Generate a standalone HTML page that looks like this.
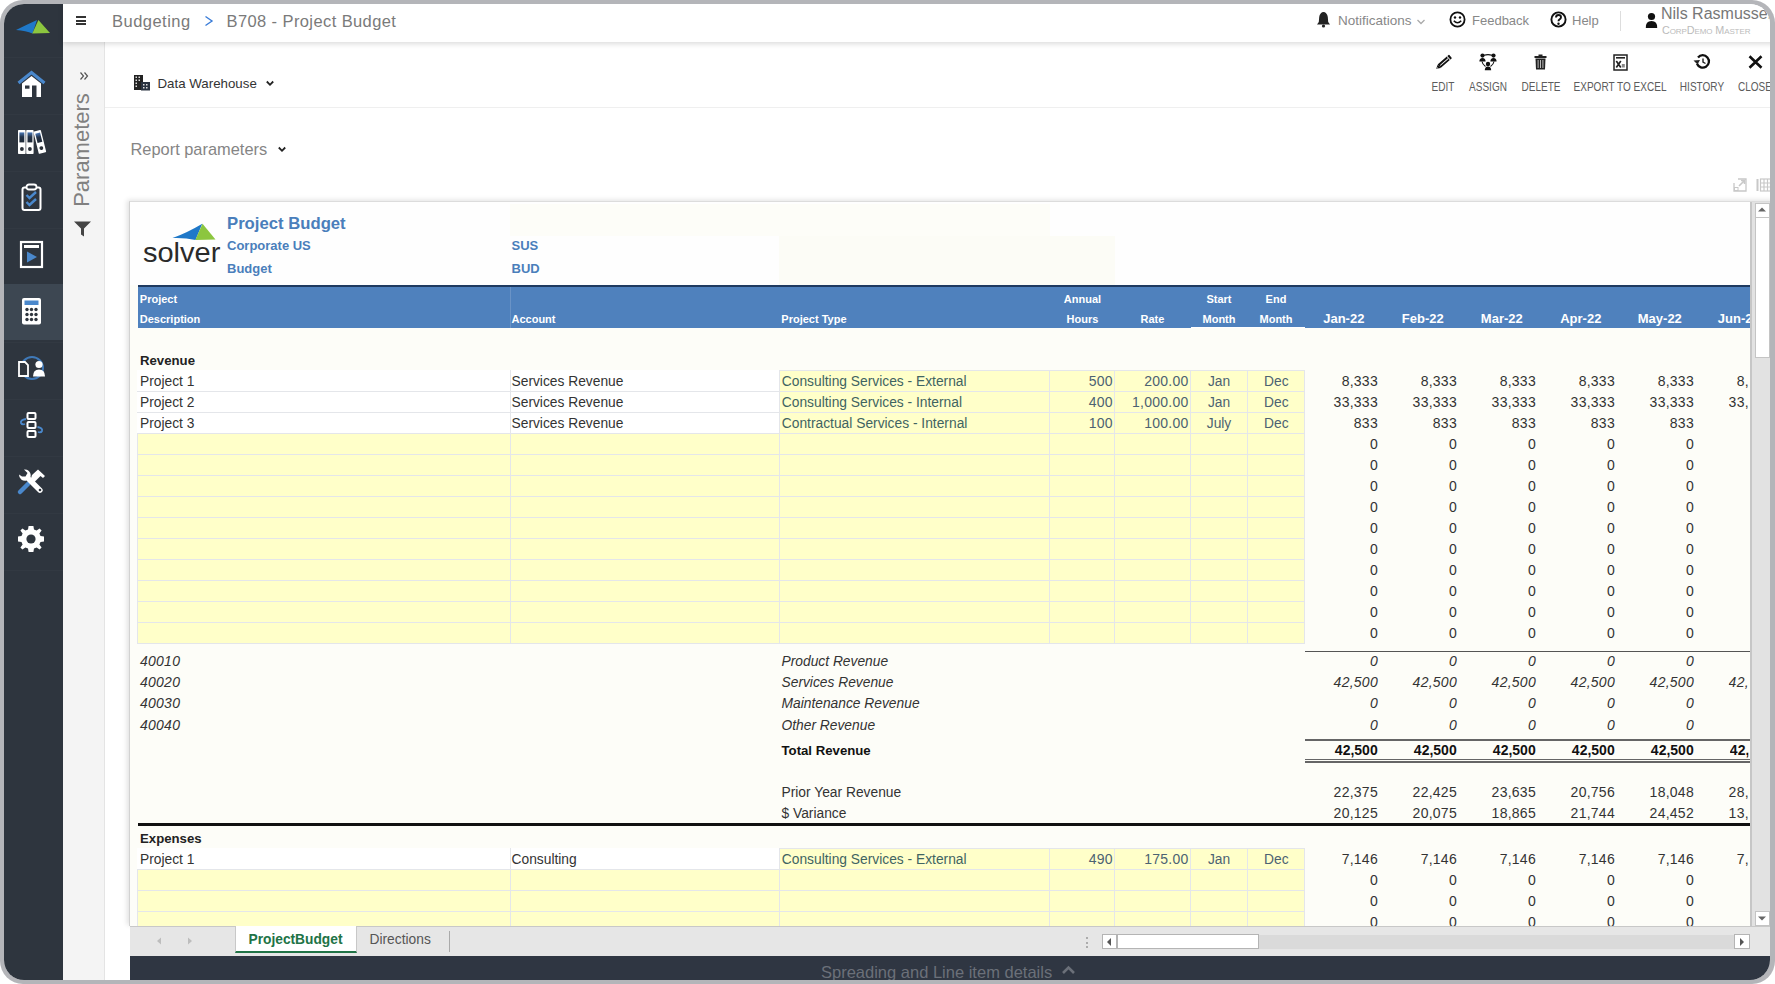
<!DOCTYPE html><html><head><meta charset="utf-8"><style>
*{box-sizing:border-box;margin:0;padding:0}
html,body{width:1775px;height:984px;overflow:hidden;background:#fff;font-family:"Liberation Sans",sans-serif}
.a{position:absolute}
#frame{position:absolute;left:0;top:0;width:1775px;height:984px;border-radius:23px;background:#b4b5b9}
#app{position:absolute;left:0;top:0;width:1775px;height:984px;clip-path:inset(4px 5px 4px 4px round 20px);background:#fff;overflow:hidden}
.t{position:absolute;white-space:nowrap;line-height:21px}
.sh{font-size:13.5px;color:#222}
</style></head><body>
<div id="frame"></div><div id="app">
<div class="a" style="left:0;top:0;width:63px;height:984px;background:#2e353e"></div>
<div class="a" style="left:4px;top:56.5px;width:59px;height:1px;background:#323942"></div>
<div class="a" style="left:4px;top:113.5px;width:59px;height:1px;background:#323942"></div>
<div class="a" style="left:4px;top:170.5px;width:59px;height:1px;background:#323942"></div>
<div class="a" style="left:4px;top:227.5px;width:59px;height:1px;background:#323942"></div>
<div class="a" style="left:4px;top:284.5px;width:59px;height:1px;background:#323942"></div>
<div class="a" style="left:4px;top:341.5px;width:59px;height:1px;background:#323942"></div>
<div class="a" style="left:4px;top:398.5px;width:59px;height:1px;background:#323942"></div>
<div class="a" style="left:4px;top:455.5px;width:59px;height:1px;background:#323942"></div>
<div class="a" style="left:4px;top:512.5px;width:59px;height:1px;background:#323942"></div>
<div class="a" style="left:4px;top:569.5px;width:59px;height:1px;background:#323942"></div>
<div class="a" style="left:4px;top:284px;width:59px;height:56px;background:#3d4752"></div>
<div class="a" style="left:63px;top:0;width:1712px;height:42px;background:#fff;box-shadow:0 2px 5px rgba(0,0,0,.14);z-index:2"></div>
<div class="a" style="left:63px;top:42px;width:42px;height:942px;background:#f4f4f4;border-right:1px solid #e4e4e4"></div>
<div class="a" style="left:105px;top:107px;width:1670px;height:1px;background:#efefef"></div>
<svg class="a" style="left:10px;top:14px;" width="46" height="26" viewBox="0 0 46 26"><path d="M6 16 Q16 11 27 6 L22.5 19.5 Q16 16.5 6 16Z" fill="#1f78c8"/><path d="M28.4 6 L40 19 L22.3 19.5Z" fill="#8cc63f"/></svg>
<svg class="a" style="left:16px;top:70px;" width="32" height="30" viewBox="0 0 32 30"><path d="M2.5 13 L15.5 2.5 L28.5 13" fill="none" stroke="#4a88cc" stroke-width="3.2" stroke-linejoin="miter"/><path d="M6 13.5 L15.5 6 L25 13.5 V27 H6Z" fill="#fff"/><rect x="9" y="15.5" width="4.5" height="3.2" fill="#2e353e"/><rect x="16" y="15.5" width="4.5" height="11.5" fill="#2e353e"/></svg>
<svg class="a" style="left:16px;top:128px;" width="32" height="28" viewBox="0 0 32 28"><defs><linearGradient id="bl" x1="0" y1="0" x2="0" y2="1"><stop offset="0" stop-color="#4a78b8"/><stop offset="0.45" stop-color="#233247"/><stop offset="1" stop-color="#1e2835"/></linearGradient></defs><g fill="#fff"><rect x="2" y="2" width="7.6" height="24" rx="0.8"/><rect x="10.2" y="2" width="7.4" height="24" rx="0.8"/></g><g fill="url(#bl)"><rect x="3.4" y="4.4" width="4.9" height="10"/><rect x="11.5" y="4.4" width="4.9" height="10"/></g><g fill="#2a3038"><circle cx="5.9" cy="21" r="1.9"/><circle cx="13.9" cy="21" r="1.9"/></g><g transform="rotate(-14 23 14)"><rect x="20" y="2.6" width="7.6" height="23" rx="0.8" fill="#fff"/><rect x="21.4" y="5" width="4.9" height="9.6" fill="url(#bl)"/><circle cx="23.8" cy="20.5" r="1.9" fill="#2a3038"/></g></svg>
<svg class="a" style="left:20px;top:182px;" width="24" height="31" viewBox="0 0 24 31"><rect x="2.5" y="5.5" width="18" height="22.5" rx="2" fill="none" stroke="#fff" stroke-width="2"/><rect x="6.5" y="2.5" width="10" height="5" rx="2.5" fill="#2e353e" stroke="#fff" stroke-width="1.8"/><path d="M6.5 13 L9.5 16 L16 10 M6.5 20 L9.5 23 L16 17" fill="none" stroke="#4a88cc" stroke-width="2.4"/></svg>
<svg class="a" style="left:19px;top:240px;" width="26" height="30" viewBox="0 0 26 30"><rect x="2" y="2" width="21" height="25" fill="none" stroke="#fff" stroke-width="2.2"/><rect x="5" y="5" width="15" height="3" fill="#fff"/><path d="M8 11.5 L18 17 L8 22.5Z" fill="#4a88cc"/></svg>
<svg class="a" style="left:21px;top:297px;" width="22" height="29" viewBox="0 0 22 29"><rect x="1" y="1" width="19" height="26.5" rx="2" fill="#fff"/><rect x="3.5" y="3.5" width="14" height="4.5" fill="#4a88cc"/><g fill="#2e353e"><circle cx="6" cy="12.5" r="1.7"/><circle cx="10.5" cy="12.5" r="1.7"/><circle cx="15" cy="12.5" r="1.7"/><circle cx="6" cy="17.5" r="1.7"/><circle cx="10.5" cy="17.5" r="1.7"/><circle cx="15" cy="17.5" r="1.7"/><circle cx="6" cy="22.5" r="1.7"/><circle cx="10.5" cy="22.5" r="1.7"/><circle cx="15" cy="22.5" r="1.7"/></g></svg>
<svg class="a" style="left:16px;top:354px;" width="32" height="28" viewBox="0 0 32 28"><circle cx="16" cy="14" r="11" fill="none" stroke="#3f79b8" stroke-width="2"/><path d="M3 8 H9 L12 11 V22 H3Z" fill="#2e353e" stroke="#fff" stroke-width="1.8"/><circle cx="23" cy="10.5" r="3.6" fill="#fff"/><path d="M17 22.5 Q17 15.5 23 15.5 Q29 15.5 29 22.5Z" fill="#fff"/></svg>
<svg class="a" style="left:18px;top:411px;" width="28" height="29" viewBox="0 0 28 29"><g fill="none" stroke="#fff" stroke-width="2"><rect x="9.5" y="2" width="8" height="6" rx="1"/><rect x="9.5" y="11" width="8" height="6" rx="1"/><rect x="9.5" y="20" width="8" height="6" rx="1"/></g><path d="M8 8 Q2 9 3 12 Q4 14 7 13 M19.5 16 Q25 17 24 20 Q23 22 20 21" fill="none" stroke="#4a88cc" stroke-width="1.8"/></svg>
<svg class="a" style="left:16px;top:468px;" width="31" height="28" viewBox="0 0 31 28"><path d="M4 24 L12 16" stroke="#4a88cc" stroke-width="4.5" stroke-linecap="round"/><path d="M3 6.5 A6 6 0 0 0 10.5 12.5 L22 24 A2.5 2.5 0 0 0 26 20.5 L14.5 9 A6 6 0 0 0 8 1.5 L11.5 5 L9.5 8.5 L6 8.5Z" fill="#fff"/><path d="M16 7 L22 1.5 L29 8 L27 10 L24.5 8 L16.5 16 L14 13.5Z" fill="#fff"/><circle cx="24" cy="22" r="1.3" fill="#2e353e"/></svg>
<svg class="a" style="left:17px;top:525px;" width="28" height="28" viewBox="0 0 28 28"><g transform="translate(14 14)"><path fill="#fff" d="M-2.4 -13 H2.4 L3 -9.5 L5.6 -8.4 L8.6 -10.6 L10.6 -8.6 L8.4 -5.6 L9.5 -3 L13 -2.4 V2.4 L9.5 3 L8.4 5.6 L10.6 8.6 L8.6 10.6 L5.6 8.4 L3 9.5 L2.4 13 H-2.4 L-3 9.5 L-5.6 8.4 L-8.6 10.6 L-10.6 8.6 L-8.4 5.6 L-9.5 3 L-13 2.4 V-2.4 L-9.5 -3 L-8.4 -5.6 L-10.6 -8.6 L-8.6 -10.6 L-5.6 -8.4 L-3 -9.5Z"/><circle r="4.6" fill="#2e353e"/></g></svg>
<div class="a" style="left:0;top:0;width:1775px;height:42px;z-index:3">
<div class="a" style="left:76px;top:16px;width:10px;height:2px;background:#333"></div>
<div class="a" style="left:76px;top:19.5px;width:10px;height:2px;background:#333"></div>
<div class="a" style="left:76px;top:23px;width:10px;height:2px;background:#333"></div>
<div class="t" style="left:112px;top:10.7px;font-size:16.5px;color:#7a7a7a;letter-spacing:0.48px">Budgeting</div>
<svg class="a" style="left:204px;top:15px" width="10" height="12" viewBox="0 0 10 12"><path d="M1.5 1.5 L8 6 L1.5 10.5" fill="none" stroke="#3b7dd8" stroke-width="1.4"/></svg>
<div class="t" style="left:226.5px;top:10.7px;font-size:16.5px;color:#7a7a7a;letter-spacing:0.4px">B708 - Project Budget</div>
<svg class="a" style="left:1316px;top:11px" width="15" height="17" viewBox="0 0 15 17"><path d="M7.5 1 C5.5 1 3.5 3 3.2 6 L2.8 11 L1 13.5 H14 L12.2 11 L11.8 6 C11.5 3 9.5 1 7.5 1Z" fill="#222"/><circle cx="7.5" cy="15" r="1.6" fill="#222"/></svg>
<div class="t" style="left:1338px;top:10px;font-size:13.5px;color:#888">Notifications</div>
<svg class="a" style="left:1416px;top:18px" width="10" height="8" viewBox="0 0 10 8"><path d="M1.5 2 L5 5.5 L8.5 2" fill="none" stroke="#aaa" stroke-width="1.3"/></svg>
<svg class="a" style="left:1449px;top:11px" width="17" height="17" viewBox="0 0 17 17"><circle cx="8.5" cy="8.5" r="7.1" fill="none" stroke="#111" stroke-width="1.8"/><circle cx="6" cy="6.5" r="1.2" fill="#111"/><circle cx="11" cy="6.5" r="1.2" fill="#111"/><path d="M4.8 9.8 Q8.5 13.8 12.2 9.8" fill="none" stroke="#111" stroke-width="1.6"/></svg>
<div class="t" style="left:1472px;top:10px;font-size:13px;color:#888">Feedback</div>
<svg class="a" style="left:1550px;top:11px" width="18" height="17" viewBox="0 0 18 17"><circle cx="8.5" cy="8.5" r="7.1" fill="none" stroke="#111" stroke-width="1.9"/><path d="M6 6.5 Q6 4 8.5 4 Q11 4 11 6.3 Q11 7.8 9.3 8.6 Q8.5 9 8.5 10.3" fill="none" stroke="#111" stroke-width="1.9"/><circle cx="8.5" cy="12.7" r="1.2" fill="#111"/></svg>
<div class="t" style="left:1572px;top:10px;font-size:13px;color:#888">Help</div>
<div class="a" style="left:1620px;top:11px;width:1px;height:20px;background:#ddd"></div>
<svg class="a" style="left:1645px;top:12px" width="13" height="17" viewBox="0 0 13 17"><circle cx="6.5" cy="4.5" r="3.6" fill="#111"/><path d="M0.8 16 Q0.5 9 6.5 9 Q12.5 9 12.2 16Z" fill="#111"/></svg>
<div class="t" style="left:1661px;top:3px;font-size:16px;color:#777;line-height:21px">Nils Rasmussen</div>
<div class="t" style="left:1662px;top:24px;font-size:10.8px;color:#bbb;line-height:12px;font-variant:small-caps;letter-spacing:-0.1px">CorpDemo Master</div>
</div>
<svg class="a" style="left:79px;top:71px" width="10" height="10" viewBox="0 0 10 10"><path d="M1.5 1.5 L4.5 5 L1.5 8.5 M5.5 1.5 L8.5 5 L5.5 8.5" fill="none" stroke="#555" stroke-width="1.2"/></svg>
<div class="t" style="left:81.5px;top:150px;font-size:22px;color:#808080;line-height:22px;transform:translate(-50%,-50%) rotate(-90deg);">Parameters</div>
<svg class="a" style="left:73px;top:220px" width="19" height="18" viewBox="0 0 19 18"><path d="M1 1.5 H18 L11 8.5 V16.5 L8 14.5 V8.5Z" fill="#444"/></svg>
<svg class="a" style="left:134px;top:75px" width="16" height="16" viewBox="0 0 16 16"><rect x="0" y="0" width="9" height="15" fill="#222"/><rect x="7" y="7" width="9" height="8.5" fill="#2a3340"/><g fill="#ddd"><rect x="1.5" y="1.5" width="1.5" height="1.5"/><rect x="4.5" y="1.5" width="1.5" height="1.5"/><rect x="1.5" y="4.5" width="1.5" height="1.5"/><rect x="4.5" y="4.5" width="1.5" height="1.5"/><rect x="1.5" y="7.5" width="1.5" height="1.5"/><rect x="1.5" y="10.5" width="1.5" height="1.5"/><rect x="9" y="9" width="1.5" height="1.5"/><rect x="12" y="9" width="1.5" height="1.5"/><rect x="9" y="12" width="1.5" height="1.5"/><rect x="12" y="12" width="1.5" height="1.5"/></g></svg>
<div class="t" style="left:157.5px;top:72.5px;font-size:13.3px;color:#333">Data Warehouse</div>
<svg class="a" style="left:265px;top:79px" width="10" height="9" viewBox="0 0 10 9"><path d="M1.8 2.5 L5 5.8 L8.2 2.5" fill="none" stroke="#222" stroke-width="1.8"/></svg>
<div class="t" style="left:130.5px;top:138.5px;font-size:16.4px;color:#858585">Report parameters</div>
<svg class="a" style="left:277px;top:145px" width="10" height="9" viewBox="0 0 10 9"><path d="M1.8 2.5 L5 5.8 L8.2 2.5" fill="none" stroke="#222" stroke-width="1.8"/></svg>
<div class="t" style="left:1443.3px;top:76.8px;font-size:12.4px;color:#5c5c5c;transform:translateX(-50%) scaleX(0.81);line-height:20px">EDIT</div>
<div class="t" style="left:1488px;top:76.8px;font-size:12.4px;color:#5c5c5c;transform:translateX(-50%) scaleX(0.81);line-height:20px">ASSIGN</div>
<div class="t" style="left:1540.7px;top:76.8px;font-size:12.4px;color:#5c5c5c;transform:translateX(-50%) scaleX(0.81);line-height:20px">DELETE</div>
<div class="t" style="left:1619.7px;top:76.8px;font-size:12.4px;color:#5c5c5c;transform:translateX(-50%) scaleX(0.81);line-height:20px">EXPORT TO EXCEL</div>
<div class="t" style="left:1702.3px;top:76.8px;font-size:12.4px;color:#5c5c5c;transform:translateX(-50%) scaleX(0.81);line-height:20px">HISTORY</div>
<div class="t" style="left:1755px;top:76.8px;font-size:12.4px;color:#5c5c5c;transform:translateX(-50%) scaleX(0.81);line-height:20px">CLOSE</div>
<svg class="a" style="left:1433.5px;top:52.75px" width="19" height="19" viewBox="0 0 19 19"><g transform="rotate(-41 9.5 9.5)"><rect x="3.8" y="7.2" width="15" height="4.6" rx="0.6" fill="#111"/><path d="M3.9 7.2 L-0.2 9.5 L3.9 11.8Z" fill="#111"/><rect x="5" y="9.1" width="10.5" height="0.9" fill="#fff"/><rect x="15.8" y="7.2" width="0.8" height="4.6" fill="#fff"/><path d="M0.9 9 L2.2 9.5 L0.9 10Z" fill="#fff"/></g></svg>
<svg class="a" style="left:1479px;top:53px" width="18" height="18" viewBox="0 0 18 18"><g stroke="#111" stroke-width="1.1" fill="none"><path d="M5 2.2 Q9 1 13 2.2"/><path d="M3 8.5 Q3.5 11.5 6.5 13.5"/><path d="M15 8.5 Q14.5 11.5 11.5 13.5"/></g><g fill="#111"><circle cx="3.5" cy="2.6" r="2.1"/><path d="M0.4 8.6 Q0.4 5 3.5 5 Q6.6 5 6.6 8.6Z"/><circle cx="14.5" cy="2.6" r="2.1"/><path d="M11.4 8.6 Q11.4 5 14.5 5 Q17.6 5 17.6 8.6Z"/><circle cx="9" cy="11" r="2.2"/><path d="M5.8 17.2 Q5.8 13.4 9 13.4 Q12.2 13.4 12.2 17.2Z"/></g></svg>
<svg class="a" style="left:1534px;top:54px" width="13" height="16" viewBox="0 0 13 16"><rect x="4.5" y="0.5" width="4" height="2" fill="#222"/><rect x="0.5" y="2" width="12" height="2" fill="#222"/><path d="M1.5 4.5 H11.5 L11 15.5 H2Z" fill="#222"/><g fill="#bbb"><rect x="3.6" y="6" width="1" height="8"/><rect x="6" y="6" width="1" height="8"/><rect x="8.4" y="6" width="1" height="8"/></g></svg>
<svg class="a" style="left:1612.5px;top:54px" width="15" height="17" viewBox="0 0 15 17"><rect x="1" y="1" width="13" height="15" fill="#fff" stroke="#222" stroke-width="1.5"/><rect x="3" y="3" width="9" height="1.6" fill="#222"/><path d="M3.3 7 L7.8 13.5 M7.8 7 L3.3 13.5" stroke="#222" stroke-width="1.7"/><rect x="8.8" y="10" width="3" height="3.5" fill="#888"/></svg>
<svg class="a" style="left:1693px;top:54px" width="18" height="16" viewBox="0 0 18 16"><path d="M4 9.8 A6.2 6.2 0 1 0 5 3.4" fill="none" stroke="#111" stroke-width="2.3"/><path d="M0.5 6.5 L4.5 10.5 L7 6Z" fill="#222"/><path d="M10 4.5 V8.2 L12.5 9.5" fill="none" stroke="#222" stroke-width="1.4"/></svg>
<svg class="a" style="left:1748px;top:55px" width="15" height="14" viewBox="0 0 15 14"><path d="M1.5 1.2 L13.5 12.8 M13.5 1.2 L1.5 12.8" stroke="#111" stroke-width="2.6"/></svg>
<div class="a" style="left:129px;top:201px;width:1646px;height:725px;background:#fdfdf8;border-left:1px solid #d2d2d2;border-top:1px solid #dcdcdc;box-shadow:-2px -1px 5px rgba(0,0,0,.12)"></div>
<div class="a" style="left:0;top:0;width:1750px;height:926px;clip-path:inset(202px 0 0 130px);z-index:1">
<div class="a" style="left:130px;top:202px;width:1620px;height:83px;background:#fefefe"></div>
<div class="a" style="left:779px;top:236px;width:336px;height:49px;background:#fcfcf6"></div>
<div class="a" style="left:510px;top:204px;width:540px;height:32px;background:#fdfdf8"></div>
<svg class="a" style="left:171px;top:222px" width="46" height="20" viewBox="0 0 46 20"><path d="M1.5 16 Q15 11.5 31.3 1.8 L24.5 18 Q14 15.5 1.5 16Z" fill="#1f78c8"/><path d="M31.5 1.8 L44.5 17.6 L24.3 18Z" fill="#8cc63f"/></svg>
<div class="t" style="left:142.5px;top:241.90px;font-size:28px;color:#2a2a2a;font-weight:normal;font-style:normal;transform-origin:0 0;transform:scaleX(1.035);">solver</div>
<div class="t" style="left:227px;top:212.71px;font-size:16.7px;color:#4a7ebb;font-weight:bold;font-style:normal;">Project Budget</div>
<div class="t" style="left:227px;top:235.10px;font-size:13px;color:#4a7ebb;font-weight:bold;font-style:normal;">Corporate US</div>
<div class="t" style="left:227px;top:257.60px;font-size:13px;color:#4a7ebb;font-weight:bold;font-style:normal;">Budget</div>
<div class="t" style="left:511.5px;top:235.10px;font-size:13px;color:#4a7ebb;font-weight:bold;font-style:normal;">SUS</div>
<div class="t" style="left:511.5px;top:257.60px;font-size:13px;color:#4a7ebb;font-weight:bold;font-style:normal;">BUD</div>
<div class="a" style="left:137.5px;top:285px;width:1612.5px;height:43px;background:#4f81bd"></div>
<div class="a" style="left:137.5px;top:285px;width:1612.5px;height:2px;background:#1f3a60"></div>
<div class="a" style="left:510px;top:287px;width:1px;height:41px;background:#6a93c6"></div>
<div class="a" style="left:1191px;top:327px;width:114px;height:1px;background:#ffffff"></div>
<div class="t" style="left:139.8px;top:288.79px;font-size:11px;color:#ffffff;font-weight:bold;font-style:normal;">Project</div>
<div class="t" style="left:139.8px;top:309.49px;font-size:11px;color:#ffffff;font-weight:bold;font-style:normal;">Description</div>
<div class="t" style="left:511.5px;top:309.49px;font-size:11px;color:#ffffff;font-weight:bold;font-style:normal;">Account</div>
<div class="t" style="left:781.3px;top:309.49px;font-size:11px;color:#ffffff;font-weight:bold;font-style:normal;">Project Type</div>
<div class="t" style="left:1082.5px;top:288.79px;font-size:11px;color:#ffffff;font-weight:bold;font-style:normal;transform:translateX(-50%);">Annual</div>
<div class="t" style="left:1082.5px;top:309.49px;font-size:11px;color:#ffffff;font-weight:bold;font-style:normal;transform:translateX(-50%);">Hours</div>
<div class="t" style="left:1152.4px;top:309.49px;font-size:11px;color:#ffffff;font-weight:bold;font-style:normal;transform:translateX(-50%);">Rate</div>
<div class="t" style="left:1219px;top:288.79px;font-size:11px;color:#ffffff;font-weight:bold;font-style:normal;transform:translateX(-50%);">Start</div>
<div class="t" style="left:1219px;top:309.49px;font-size:11px;color:#ffffff;font-weight:bold;font-style:normal;transform:translateX(-50%);">Month</div>
<div class="t" style="left:1276px;top:288.79px;font-size:11px;color:#ffffff;font-weight:bold;font-style:normal;transform:translateX(-50%);">End</div>
<div class="t" style="left:1276px;top:309.49px;font-size:11px;color:#ffffff;font-weight:bold;font-style:normal;transform:translateX(-50%);">Month</div>
<div class="t" style="left:1343.8px;top:308.00px;font-size:13px;color:#ffffff;font-weight:bold;font-style:normal;transform:translateX(-50%);">Jan-22</div>
<div class="t" style="left:1422.8px;top:308.00px;font-size:13px;color:#ffffff;font-weight:bold;font-style:normal;transform:translateX(-50%);">Feb-22</div>
<div class="t" style="left:1501.8px;top:308.00px;font-size:13px;color:#ffffff;font-weight:bold;font-style:normal;transform:translateX(-50%);">Mar-22</div>
<div class="t" style="left:1580.8px;top:308.00px;font-size:13px;color:#ffffff;font-weight:bold;font-style:normal;transform:translateX(-50%);">Apr-22</div>
<div class="t" style="left:1659.8px;top:308.00px;font-size:13px;color:#ffffff;font-weight:bold;font-style:normal;transform:translateX(-50%);">May-22</div>
<div class="t" style="left:1738.8px;top:308.00px;font-size:13px;color:#ffffff;font-weight:bold;font-style:normal;transform:translateX(-50%);">Jun-22</div>
<div class="a" style="left:137px;top:370px;width:642px;height:63px;background:#ffffff"></div>
<div class="a" style="left:137px;top:391px;width:642px;height:1px;background:#e4e6ea"></div>
<div class="a" style="left:137px;top:412px;width:642px;height:1px;background:#e4e6ea"></div>
<div class="a" style="left:137px;top:433px;width:642px;height:1px;background:#e4e6ea"></div>
<div class="a" style="left:510px;top:370px;width:1px;height:63px;background:#e4e6ea"></div>
<div class="a" style="left:779px;top:370px;width:526px;height:64px;background:#ffffc9"></div>
<div class="a" style="left:779px;top:370px;width:526px;height:1px;background:#e4e6ea"></div>
<div class="a" style="left:779px;top:391px;width:526px;height:1px;background:#e4e6ea"></div>
<div class="a" style="left:779px;top:412px;width:526px;height:1px;background:#e4e6ea"></div>
<div class="a" style="left:779px;top:433px;width:526px;height:1px;background:#e4e6ea"></div>
<div class="a" style="left:779px;top:370px;width:1px;height:64px;background:#e4e6ea"></div>
<div class="a" style="left:1049px;top:370px;width:1px;height:64px;background:#e4e6ea"></div>
<div class="a" style="left:1114px;top:370px;width:1px;height:64px;background:#e4e6ea"></div>
<div class="a" style="left:1190px;top:370px;width:1px;height:64px;background:#e4e6ea"></div>
<div class="a" style="left:1247px;top:370px;width:1px;height:64px;background:#e4e6ea"></div>
<div class="a" style="left:1304px;top:370px;width:1px;height:64px;background:#e4e6ea"></div>
<div class="a" style="left:137px;top:433px;width:1168px;height:211px;background:#ffffc9"></div>
<div class="a" style="left:137px;top:433px;width:1168px;height:1px;background:#e4e6ea"></div>
<div class="a" style="left:137px;top:454px;width:1168px;height:1px;background:#e4e6ea"></div>
<div class="a" style="left:137px;top:475px;width:1168px;height:1px;background:#e4e6ea"></div>
<div class="a" style="left:137px;top:496px;width:1168px;height:1px;background:#e4e6ea"></div>
<div class="a" style="left:137px;top:517px;width:1168px;height:1px;background:#e4e6ea"></div>
<div class="a" style="left:137px;top:538px;width:1168px;height:1px;background:#e4e6ea"></div>
<div class="a" style="left:137px;top:559px;width:1168px;height:1px;background:#e4e6ea"></div>
<div class="a" style="left:137px;top:580px;width:1168px;height:1px;background:#e4e6ea"></div>
<div class="a" style="left:137px;top:601px;width:1168px;height:1px;background:#e4e6ea"></div>
<div class="a" style="left:137px;top:622px;width:1168px;height:1px;background:#e4e6ea"></div>
<div class="a" style="left:137px;top:643px;width:1168px;height:1px;background:#e4e6ea"></div>
<div class="a" style="left:137px;top:433px;width:1px;height:211px;background:#e4e6ea"></div>
<div class="a" style="left:510px;top:433px;width:1px;height:211px;background:#e4e6ea"></div>
<div class="a" style="left:779px;top:433px;width:1px;height:211px;background:#e4e6ea"></div>
<div class="a" style="left:1049px;top:433px;width:1px;height:211px;background:#e4e6ea"></div>
<div class="a" style="left:1114px;top:433px;width:1px;height:211px;background:#e4e6ea"></div>
<div class="a" style="left:1190px;top:433px;width:1px;height:211px;background:#e4e6ea"></div>
<div class="a" style="left:1247px;top:433px;width:1px;height:211px;background:#e4e6ea"></div>
<div class="a" style="left:1304px;top:433px;width:1px;height:211px;background:#e4e6ea"></div>
<div class="t" style="left:140px;top:349.83px;font-size:13.2px;color:#222;font-weight:bold;font-style:normal;">Revenue</div>
<div class="t" style="left:140px;top:370.92px;font-size:13.8px;color:#333;font-weight:normal;font-style:normal;">Project 1</div>
<div class="t" style="left:511.5px;top:370.92px;font-size:13.8px;color:#333;font-weight:normal;font-style:normal;">Services Revenue</div>
<div class="t" style="left:781.8px;top:370.92px;font-size:13.8px;color:#3f6462;font-weight:normal;font-style:normal;">Consulting Services - External</div>
<div class="t" style="left:1112.75px;top:370.85px;font-size:14px;color:#4c6272;font-weight:normal;font-style:normal;transform:translateX(-100%);letter-spacing:0.25px;">500</div>
<div class="t" style="left:1188.55px;top:370.85px;font-size:14px;color:#4c6272;font-weight:normal;font-style:normal;transform:translateX(-100%);letter-spacing:0.25px;">200.00</div>
<div class="t" style="left:1219px;top:370.92px;font-size:13.8px;color:#4c6272;font-weight:normal;font-style:normal;transform:translateX(-50%);">Jan</div>
<div class="t" style="left:1276.3px;top:370.92px;font-size:13.8px;color:#4c6272;font-weight:normal;font-style:normal;transform:translateX(-50%);">Dec</div>
<div class="t" style="left:1377.95px;top:370.85px;font-size:14px;color:#333;font-weight:normal;font-style:normal;transform:translateX(-100%);letter-spacing:0.25px;">8,333</div>
<div class="t" style="left:1456.95px;top:370.85px;font-size:14px;color:#333;font-weight:normal;font-style:normal;transform:translateX(-100%);letter-spacing:0.25px;">8,333</div>
<div class="t" style="left:1535.95px;top:370.85px;font-size:14px;color:#333;font-weight:normal;font-style:normal;transform:translateX(-100%);letter-spacing:0.25px;">8,333</div>
<div class="t" style="left:1614.95px;top:370.85px;font-size:14px;color:#333;font-weight:normal;font-style:normal;transform:translateX(-100%);letter-spacing:0.25px;">8,333</div>
<div class="t" style="left:1693.95px;top:370.85px;font-size:14px;color:#333;font-weight:normal;font-style:normal;transform:translateX(-100%);letter-spacing:0.25px;">8,333</div>
<div class="t" style="left:1772.95px;top:370.85px;font-size:14px;color:#333;font-weight:normal;font-style:normal;transform:translateX(-100%);letter-spacing:0.25px;clip-path:inset(-5px 24.4px -5px 0);">8,333</div>
<div class="t" style="left:140px;top:391.92px;font-size:13.8px;color:#333;font-weight:normal;font-style:normal;">Project 2</div>
<div class="t" style="left:511.5px;top:391.92px;font-size:13.8px;color:#333;font-weight:normal;font-style:normal;">Services Revenue</div>
<div class="t" style="left:781.8px;top:391.92px;font-size:13.8px;color:#3f6462;font-weight:normal;font-style:normal;">Consulting Services - Internal</div>
<div class="t" style="left:1112.75px;top:391.85px;font-size:14px;color:#4c6272;font-weight:normal;font-style:normal;transform:translateX(-100%);letter-spacing:0.25px;">400</div>
<div class="t" style="left:1188.55px;top:391.85px;font-size:14px;color:#4c6272;font-weight:normal;font-style:normal;transform:translateX(-100%);letter-spacing:0.25px;">1,000.00</div>
<div class="t" style="left:1219px;top:391.92px;font-size:13.8px;color:#4c6272;font-weight:normal;font-style:normal;transform:translateX(-50%);">Jan</div>
<div class="t" style="left:1276.3px;top:391.92px;font-size:13.8px;color:#4c6272;font-weight:normal;font-style:normal;transform:translateX(-50%);">Dec</div>
<div class="t" style="left:1377.95px;top:391.85px;font-size:14px;color:#333;font-weight:normal;font-style:normal;transform:translateX(-100%);letter-spacing:0.25px;">33,333</div>
<div class="t" style="left:1456.95px;top:391.85px;font-size:14px;color:#333;font-weight:normal;font-style:normal;transform:translateX(-100%);letter-spacing:0.25px;">33,333</div>
<div class="t" style="left:1535.95px;top:391.85px;font-size:14px;color:#333;font-weight:normal;font-style:normal;transform:translateX(-100%);letter-spacing:0.25px;">33,333</div>
<div class="t" style="left:1614.95px;top:391.85px;font-size:14px;color:#333;font-weight:normal;font-style:normal;transform:translateX(-100%);letter-spacing:0.25px;">33,333</div>
<div class="t" style="left:1693.95px;top:391.85px;font-size:14px;color:#333;font-weight:normal;font-style:normal;transform:translateX(-100%);letter-spacing:0.25px;">33,333</div>
<div class="t" style="left:1772.95px;top:391.85px;font-size:14px;color:#333;font-weight:normal;font-style:normal;transform:translateX(-100%);letter-spacing:0.25px;clip-path:inset(-5px 24.4px -5px 0);">33,333</div>
<div class="t" style="left:140px;top:412.92px;font-size:13.8px;color:#333;font-weight:normal;font-style:normal;">Project 3</div>
<div class="t" style="left:511.5px;top:412.92px;font-size:13.8px;color:#333;font-weight:normal;font-style:normal;">Services Revenue</div>
<div class="t" style="left:781.8px;top:412.92px;font-size:13.8px;color:#3f6462;font-weight:normal;font-style:normal;">Contractual Services - Internal</div>
<div class="t" style="left:1112.75px;top:412.85px;font-size:14px;color:#4c6272;font-weight:normal;font-style:normal;transform:translateX(-100%);letter-spacing:0.25px;">100</div>
<div class="t" style="left:1188.55px;top:412.85px;font-size:14px;color:#4c6272;font-weight:normal;font-style:normal;transform:translateX(-100%);letter-spacing:0.25px;">100.00</div>
<div class="t" style="left:1219px;top:412.92px;font-size:13.8px;color:#4c6272;font-weight:normal;font-style:normal;transform:translateX(-50%);">July</div>
<div class="t" style="left:1276.3px;top:412.92px;font-size:13.8px;color:#4c6272;font-weight:normal;font-style:normal;transform:translateX(-50%);">Dec</div>
<div class="t" style="left:1377.95px;top:412.85px;font-size:14px;color:#333;font-weight:normal;font-style:normal;transform:translateX(-100%);letter-spacing:0.25px;">833</div>
<div class="t" style="left:1456.95px;top:412.85px;font-size:14px;color:#333;font-weight:normal;font-style:normal;transform:translateX(-100%);letter-spacing:0.25px;">833</div>
<div class="t" style="left:1535.95px;top:412.85px;font-size:14px;color:#333;font-weight:normal;font-style:normal;transform:translateX(-100%);letter-spacing:0.25px;">833</div>
<div class="t" style="left:1614.95px;top:412.85px;font-size:14px;color:#333;font-weight:normal;font-style:normal;transform:translateX(-100%);letter-spacing:0.25px;">833</div>
<div class="t" style="left:1693.95px;top:412.85px;font-size:14px;color:#333;font-weight:normal;font-style:normal;transform:translateX(-100%);letter-spacing:0.25px;">833</div>
<div class="t" style="left:1772.95px;top:412.85px;font-size:14px;color:#333;font-weight:normal;font-style:normal;transform:translateX(-100%);letter-spacing:0.25px;clip-path:inset(-5px 24.4px -5px 0);">833</div>
<div class="t" style="left:1377.95px;top:433.85px;font-size:14px;color:#333;font-weight:normal;font-style:normal;transform:translateX(-100%);letter-spacing:0.25px;">0</div>
<div class="t" style="left:1456.95px;top:433.85px;font-size:14px;color:#333;font-weight:normal;font-style:normal;transform:translateX(-100%);letter-spacing:0.25px;">0</div>
<div class="t" style="left:1535.95px;top:433.85px;font-size:14px;color:#333;font-weight:normal;font-style:normal;transform:translateX(-100%);letter-spacing:0.25px;">0</div>
<div class="t" style="left:1614.95px;top:433.85px;font-size:14px;color:#333;font-weight:normal;font-style:normal;transform:translateX(-100%);letter-spacing:0.25px;">0</div>
<div class="t" style="left:1693.95px;top:433.85px;font-size:14px;color:#333;font-weight:normal;font-style:normal;transform:translateX(-100%);letter-spacing:0.25px;">0</div>
<div class="t" style="left:1772.95px;top:433.85px;font-size:14px;color:#333;font-weight:normal;font-style:normal;transform:translateX(-100%);letter-spacing:0.25px;clip-path:inset(-5px 24.4px -5px 0);">0</div>
<div class="t" style="left:1377.95px;top:454.85px;font-size:14px;color:#333;font-weight:normal;font-style:normal;transform:translateX(-100%);letter-spacing:0.25px;">0</div>
<div class="t" style="left:1456.95px;top:454.85px;font-size:14px;color:#333;font-weight:normal;font-style:normal;transform:translateX(-100%);letter-spacing:0.25px;">0</div>
<div class="t" style="left:1535.95px;top:454.85px;font-size:14px;color:#333;font-weight:normal;font-style:normal;transform:translateX(-100%);letter-spacing:0.25px;">0</div>
<div class="t" style="left:1614.95px;top:454.85px;font-size:14px;color:#333;font-weight:normal;font-style:normal;transform:translateX(-100%);letter-spacing:0.25px;">0</div>
<div class="t" style="left:1693.95px;top:454.85px;font-size:14px;color:#333;font-weight:normal;font-style:normal;transform:translateX(-100%);letter-spacing:0.25px;">0</div>
<div class="t" style="left:1772.95px;top:454.85px;font-size:14px;color:#333;font-weight:normal;font-style:normal;transform:translateX(-100%);letter-spacing:0.25px;clip-path:inset(-5px 24.4px -5px 0);">0</div>
<div class="t" style="left:1377.95px;top:475.85px;font-size:14px;color:#333;font-weight:normal;font-style:normal;transform:translateX(-100%);letter-spacing:0.25px;">0</div>
<div class="t" style="left:1456.95px;top:475.85px;font-size:14px;color:#333;font-weight:normal;font-style:normal;transform:translateX(-100%);letter-spacing:0.25px;">0</div>
<div class="t" style="left:1535.95px;top:475.85px;font-size:14px;color:#333;font-weight:normal;font-style:normal;transform:translateX(-100%);letter-spacing:0.25px;">0</div>
<div class="t" style="left:1614.95px;top:475.85px;font-size:14px;color:#333;font-weight:normal;font-style:normal;transform:translateX(-100%);letter-spacing:0.25px;">0</div>
<div class="t" style="left:1693.95px;top:475.85px;font-size:14px;color:#333;font-weight:normal;font-style:normal;transform:translateX(-100%);letter-spacing:0.25px;">0</div>
<div class="t" style="left:1772.95px;top:475.85px;font-size:14px;color:#333;font-weight:normal;font-style:normal;transform:translateX(-100%);letter-spacing:0.25px;clip-path:inset(-5px 24.4px -5px 0);">0</div>
<div class="t" style="left:1377.95px;top:496.85px;font-size:14px;color:#333;font-weight:normal;font-style:normal;transform:translateX(-100%);letter-spacing:0.25px;">0</div>
<div class="t" style="left:1456.95px;top:496.85px;font-size:14px;color:#333;font-weight:normal;font-style:normal;transform:translateX(-100%);letter-spacing:0.25px;">0</div>
<div class="t" style="left:1535.95px;top:496.85px;font-size:14px;color:#333;font-weight:normal;font-style:normal;transform:translateX(-100%);letter-spacing:0.25px;">0</div>
<div class="t" style="left:1614.95px;top:496.85px;font-size:14px;color:#333;font-weight:normal;font-style:normal;transform:translateX(-100%);letter-spacing:0.25px;">0</div>
<div class="t" style="left:1693.95px;top:496.85px;font-size:14px;color:#333;font-weight:normal;font-style:normal;transform:translateX(-100%);letter-spacing:0.25px;">0</div>
<div class="t" style="left:1772.95px;top:496.85px;font-size:14px;color:#333;font-weight:normal;font-style:normal;transform:translateX(-100%);letter-spacing:0.25px;clip-path:inset(-5px 24.4px -5px 0);">0</div>
<div class="t" style="left:1377.95px;top:517.85px;font-size:14px;color:#333;font-weight:normal;font-style:normal;transform:translateX(-100%);letter-spacing:0.25px;">0</div>
<div class="t" style="left:1456.95px;top:517.85px;font-size:14px;color:#333;font-weight:normal;font-style:normal;transform:translateX(-100%);letter-spacing:0.25px;">0</div>
<div class="t" style="left:1535.95px;top:517.85px;font-size:14px;color:#333;font-weight:normal;font-style:normal;transform:translateX(-100%);letter-spacing:0.25px;">0</div>
<div class="t" style="left:1614.95px;top:517.85px;font-size:14px;color:#333;font-weight:normal;font-style:normal;transform:translateX(-100%);letter-spacing:0.25px;">0</div>
<div class="t" style="left:1693.95px;top:517.85px;font-size:14px;color:#333;font-weight:normal;font-style:normal;transform:translateX(-100%);letter-spacing:0.25px;">0</div>
<div class="t" style="left:1772.95px;top:517.85px;font-size:14px;color:#333;font-weight:normal;font-style:normal;transform:translateX(-100%);letter-spacing:0.25px;clip-path:inset(-5px 24.4px -5px 0);">0</div>
<div class="t" style="left:1377.95px;top:538.85px;font-size:14px;color:#333;font-weight:normal;font-style:normal;transform:translateX(-100%);letter-spacing:0.25px;">0</div>
<div class="t" style="left:1456.95px;top:538.85px;font-size:14px;color:#333;font-weight:normal;font-style:normal;transform:translateX(-100%);letter-spacing:0.25px;">0</div>
<div class="t" style="left:1535.95px;top:538.85px;font-size:14px;color:#333;font-weight:normal;font-style:normal;transform:translateX(-100%);letter-spacing:0.25px;">0</div>
<div class="t" style="left:1614.95px;top:538.85px;font-size:14px;color:#333;font-weight:normal;font-style:normal;transform:translateX(-100%);letter-spacing:0.25px;">0</div>
<div class="t" style="left:1693.95px;top:538.85px;font-size:14px;color:#333;font-weight:normal;font-style:normal;transform:translateX(-100%);letter-spacing:0.25px;">0</div>
<div class="t" style="left:1772.95px;top:538.85px;font-size:14px;color:#333;font-weight:normal;font-style:normal;transform:translateX(-100%);letter-spacing:0.25px;clip-path:inset(-5px 24.4px -5px 0);">0</div>
<div class="t" style="left:1377.95px;top:559.85px;font-size:14px;color:#333;font-weight:normal;font-style:normal;transform:translateX(-100%);letter-spacing:0.25px;">0</div>
<div class="t" style="left:1456.95px;top:559.85px;font-size:14px;color:#333;font-weight:normal;font-style:normal;transform:translateX(-100%);letter-spacing:0.25px;">0</div>
<div class="t" style="left:1535.95px;top:559.85px;font-size:14px;color:#333;font-weight:normal;font-style:normal;transform:translateX(-100%);letter-spacing:0.25px;">0</div>
<div class="t" style="left:1614.95px;top:559.85px;font-size:14px;color:#333;font-weight:normal;font-style:normal;transform:translateX(-100%);letter-spacing:0.25px;">0</div>
<div class="t" style="left:1693.95px;top:559.85px;font-size:14px;color:#333;font-weight:normal;font-style:normal;transform:translateX(-100%);letter-spacing:0.25px;">0</div>
<div class="t" style="left:1772.95px;top:559.85px;font-size:14px;color:#333;font-weight:normal;font-style:normal;transform:translateX(-100%);letter-spacing:0.25px;clip-path:inset(-5px 24.4px -5px 0);">0</div>
<div class="t" style="left:1377.95px;top:580.85px;font-size:14px;color:#333;font-weight:normal;font-style:normal;transform:translateX(-100%);letter-spacing:0.25px;">0</div>
<div class="t" style="left:1456.95px;top:580.85px;font-size:14px;color:#333;font-weight:normal;font-style:normal;transform:translateX(-100%);letter-spacing:0.25px;">0</div>
<div class="t" style="left:1535.95px;top:580.85px;font-size:14px;color:#333;font-weight:normal;font-style:normal;transform:translateX(-100%);letter-spacing:0.25px;">0</div>
<div class="t" style="left:1614.95px;top:580.85px;font-size:14px;color:#333;font-weight:normal;font-style:normal;transform:translateX(-100%);letter-spacing:0.25px;">0</div>
<div class="t" style="left:1693.95px;top:580.85px;font-size:14px;color:#333;font-weight:normal;font-style:normal;transform:translateX(-100%);letter-spacing:0.25px;">0</div>
<div class="t" style="left:1772.95px;top:580.85px;font-size:14px;color:#333;font-weight:normal;font-style:normal;transform:translateX(-100%);letter-spacing:0.25px;clip-path:inset(-5px 24.4px -5px 0);">0</div>
<div class="t" style="left:1377.95px;top:601.85px;font-size:14px;color:#333;font-weight:normal;font-style:normal;transform:translateX(-100%);letter-spacing:0.25px;">0</div>
<div class="t" style="left:1456.95px;top:601.85px;font-size:14px;color:#333;font-weight:normal;font-style:normal;transform:translateX(-100%);letter-spacing:0.25px;">0</div>
<div class="t" style="left:1535.95px;top:601.85px;font-size:14px;color:#333;font-weight:normal;font-style:normal;transform:translateX(-100%);letter-spacing:0.25px;">0</div>
<div class="t" style="left:1614.95px;top:601.85px;font-size:14px;color:#333;font-weight:normal;font-style:normal;transform:translateX(-100%);letter-spacing:0.25px;">0</div>
<div class="t" style="left:1693.95px;top:601.85px;font-size:14px;color:#333;font-weight:normal;font-style:normal;transform:translateX(-100%);letter-spacing:0.25px;">0</div>
<div class="t" style="left:1772.95px;top:601.85px;font-size:14px;color:#333;font-weight:normal;font-style:normal;transform:translateX(-100%);letter-spacing:0.25px;clip-path:inset(-5px 24.4px -5px 0);">0</div>
<div class="t" style="left:1377.95px;top:622.85px;font-size:14px;color:#333;font-weight:normal;font-style:normal;transform:translateX(-100%);letter-spacing:0.25px;">0</div>
<div class="t" style="left:1456.95px;top:622.85px;font-size:14px;color:#333;font-weight:normal;font-style:normal;transform:translateX(-100%);letter-spacing:0.25px;">0</div>
<div class="t" style="left:1535.95px;top:622.85px;font-size:14px;color:#333;font-weight:normal;font-style:normal;transform:translateX(-100%);letter-spacing:0.25px;">0</div>
<div class="t" style="left:1614.95px;top:622.85px;font-size:14px;color:#333;font-weight:normal;font-style:normal;transform:translateX(-100%);letter-spacing:0.25px;">0</div>
<div class="t" style="left:1693.95px;top:622.85px;font-size:14px;color:#333;font-weight:normal;font-style:normal;transform:translateX(-100%);letter-spacing:0.25px;">0</div>
<div class="t" style="left:1772.95px;top:622.85px;font-size:14px;color:#333;font-weight:normal;font-style:normal;transform:translateX(-100%);letter-spacing:0.25px;clip-path:inset(-5px 24.4px -5px 0);">0</div>
<div class="a" style="left:1304.5px;top:650.5px;width:445.5px;height:1.5px;background:#555"></div>
<div class="t" style="left:140px;top:650.95px;font-size:14px;color:#333;font-weight:normal;font-style:italic;letter-spacing:0.25px;">40010</div>
<div class="t" style="left:781.5px;top:651.02px;font-size:13.8px;color:#333;font-weight:normal;font-style:italic;">Product Revenue</div>
<div class="t" style="left:1377.95px;top:650.95px;font-size:14px;color:#333;font-weight:normal;font-style:italic;transform:translateX(-100%);letter-spacing:0.25px;">0</div>
<div class="t" style="left:1456.95px;top:650.95px;font-size:14px;color:#333;font-weight:normal;font-style:italic;transform:translateX(-100%);letter-spacing:0.25px;">0</div>
<div class="t" style="left:1535.95px;top:650.95px;font-size:14px;color:#333;font-weight:normal;font-style:italic;transform:translateX(-100%);letter-spacing:0.25px;">0</div>
<div class="t" style="left:1614.95px;top:650.95px;font-size:14px;color:#333;font-weight:normal;font-style:italic;transform:translateX(-100%);letter-spacing:0.25px;">0</div>
<div class="t" style="left:1693.95px;top:650.95px;font-size:14px;color:#333;font-weight:normal;font-style:italic;transform:translateX(-100%);letter-spacing:0.25px;">0</div>
<div class="t" style="left:1772.95px;top:650.95px;font-size:14px;color:#333;font-weight:normal;font-style:italic;transform:translateX(-100%);letter-spacing:0.25px;clip-path:inset(-5px 24.4px -5px 0);">0</div>
<div class="t" style="left:140px;top:672.15px;font-size:14px;color:#333;font-weight:normal;font-style:italic;letter-spacing:0.25px;">40020</div>
<div class="t" style="left:781.5px;top:672.22px;font-size:13.8px;color:#333;font-weight:normal;font-style:italic;">Services Revenue</div>
<div class="t" style="left:1377.95px;top:672.15px;font-size:14px;color:#333;font-weight:normal;font-style:italic;transform:translateX(-100%);letter-spacing:0.25px;">42,500</div>
<div class="t" style="left:1456.95px;top:672.15px;font-size:14px;color:#333;font-weight:normal;font-style:italic;transform:translateX(-100%);letter-spacing:0.25px;">42,500</div>
<div class="t" style="left:1535.95px;top:672.15px;font-size:14px;color:#333;font-weight:normal;font-style:italic;transform:translateX(-100%);letter-spacing:0.25px;">42,500</div>
<div class="t" style="left:1614.95px;top:672.15px;font-size:14px;color:#333;font-weight:normal;font-style:italic;transform:translateX(-100%);letter-spacing:0.25px;">42,500</div>
<div class="t" style="left:1693.95px;top:672.15px;font-size:14px;color:#333;font-weight:normal;font-style:italic;transform:translateX(-100%);letter-spacing:0.25px;">42,500</div>
<div class="t" style="left:1772.95px;top:672.15px;font-size:14px;color:#333;font-weight:normal;font-style:italic;transform:translateX(-100%);letter-spacing:0.25px;clip-path:inset(-5px 24.4px -5px 0);">42,500</div>
<div class="t" style="left:140px;top:693.35px;font-size:14px;color:#333;font-weight:normal;font-style:italic;letter-spacing:0.25px;">40030</div>
<div class="t" style="left:781.5px;top:693.42px;font-size:13.8px;color:#333;font-weight:normal;font-style:italic;">Maintenance Revenue</div>
<div class="t" style="left:1377.95px;top:693.35px;font-size:14px;color:#333;font-weight:normal;font-style:italic;transform:translateX(-100%);letter-spacing:0.25px;">0</div>
<div class="t" style="left:1456.95px;top:693.35px;font-size:14px;color:#333;font-weight:normal;font-style:italic;transform:translateX(-100%);letter-spacing:0.25px;">0</div>
<div class="t" style="left:1535.95px;top:693.35px;font-size:14px;color:#333;font-weight:normal;font-style:italic;transform:translateX(-100%);letter-spacing:0.25px;">0</div>
<div class="t" style="left:1614.95px;top:693.35px;font-size:14px;color:#333;font-weight:normal;font-style:italic;transform:translateX(-100%);letter-spacing:0.25px;">0</div>
<div class="t" style="left:1693.95px;top:693.35px;font-size:14px;color:#333;font-weight:normal;font-style:italic;transform:translateX(-100%);letter-spacing:0.25px;">0</div>
<div class="t" style="left:1772.95px;top:693.35px;font-size:14px;color:#333;font-weight:normal;font-style:italic;transform:translateX(-100%);letter-spacing:0.25px;clip-path:inset(-5px 24.4px -5px 0);">0</div>
<div class="t" style="left:140px;top:714.55px;font-size:14px;color:#333;font-weight:normal;font-style:italic;letter-spacing:0.25px;">40040</div>
<div class="t" style="left:781.5px;top:714.62px;font-size:13.8px;color:#333;font-weight:normal;font-style:italic;">Other Revenue</div>
<div class="t" style="left:1377.95px;top:714.55px;font-size:14px;color:#333;font-weight:normal;font-style:italic;transform:translateX(-100%);letter-spacing:0.25px;">0</div>
<div class="t" style="left:1456.95px;top:714.55px;font-size:14px;color:#333;font-weight:normal;font-style:italic;transform:translateX(-100%);letter-spacing:0.25px;">0</div>
<div class="t" style="left:1535.95px;top:714.55px;font-size:14px;color:#333;font-weight:normal;font-style:italic;transform:translateX(-100%);letter-spacing:0.25px;">0</div>
<div class="t" style="left:1614.95px;top:714.55px;font-size:14px;color:#333;font-weight:normal;font-style:italic;transform:translateX(-100%);letter-spacing:0.25px;">0</div>
<div class="t" style="left:1693.95px;top:714.55px;font-size:14px;color:#333;font-weight:normal;font-style:italic;transform:translateX(-100%);letter-spacing:0.25px;">0</div>
<div class="t" style="left:1772.95px;top:714.55px;font-size:14px;color:#333;font-weight:normal;font-style:italic;transform:translateX(-100%);letter-spacing:0.25px;clip-path:inset(-5px 24.4px -5px 0);">0</div>
<div class="a" style="left:1304.5px;top:738.5px;width:445.5px;height:2.0px;background:#666"></div>
<div class="t" style="left:781.5px;top:740.13px;font-size:13.2px;color:#111;font-weight:bold;font-style:normal;">Total Revenue</div>
<div class="t" style="left:1377.7px;top:739.85px;font-size:14px;color:#111;font-weight:bold;font-style:normal;transform:translateX(-100%);">42,500</div>
<div class="t" style="left:1456.7px;top:739.85px;font-size:14px;color:#111;font-weight:bold;font-style:normal;transform:translateX(-100%);">42,500</div>
<div class="t" style="left:1535.7px;top:739.85px;font-size:14px;color:#111;font-weight:bold;font-style:normal;transform:translateX(-100%);">42,500</div>
<div class="t" style="left:1614.7px;top:739.85px;font-size:14px;color:#111;font-weight:bold;font-style:normal;transform:translateX(-100%);">42,500</div>
<div class="t" style="left:1693.7px;top:739.85px;font-size:14px;color:#111;font-weight:bold;font-style:normal;transform:translateX(-100%);">42,500</div>
<div class="t" style="left:1772.7px;top:739.85px;font-size:14px;color:#111;font-weight:bold;font-style:normal;transform:translateX(-100%);clip-path:inset(-5px 24.1px -5px 0);">42,500</div>
<div class="a" style="left:1304.5px;top:758.8px;width:445.5px;height:1.5px;background:#666"></div>
<div class="a" style="left:1304.5px;top:761.3px;width:445.5px;height:1.5px;background:#666"></div>
<div class="t" style="left:781.5px;top:782.42px;font-size:13.8px;color:#333;font-weight:normal;font-style:normal;">Prior Year Revenue</div>
<div class="t" style="left:781.5px;top:803.02px;font-size:13.8px;color:#333;font-weight:normal;font-style:normal;">$ Variance</div>
<div class="t" style="left:1377.95px;top:782.35px;font-size:14px;color:#333;font-weight:normal;font-style:normal;transform:translateX(-100%);letter-spacing:0.25px;">22,375</div>
<div class="t" style="left:1456.95px;top:782.35px;font-size:14px;color:#333;font-weight:normal;font-style:normal;transform:translateX(-100%);letter-spacing:0.25px;">22,425</div>
<div class="t" style="left:1535.95px;top:782.35px;font-size:14px;color:#333;font-weight:normal;font-style:normal;transform:translateX(-100%);letter-spacing:0.25px;">23,635</div>
<div class="t" style="left:1614.95px;top:782.35px;font-size:14px;color:#333;font-weight:normal;font-style:normal;transform:translateX(-100%);letter-spacing:0.25px;">20,756</div>
<div class="t" style="left:1693.95px;top:782.35px;font-size:14px;color:#333;font-weight:normal;font-style:normal;transform:translateX(-100%);letter-spacing:0.25px;">18,048</div>
<div class="t" style="left:1772.95px;top:782.35px;font-size:14px;color:#333;font-weight:normal;font-style:normal;transform:translateX(-100%);letter-spacing:0.25px;clip-path:inset(-5px 24.4px -5px 0);">28,000</div>
<div class="t" style="left:1377.95px;top:802.95px;font-size:14px;color:#333;font-weight:normal;font-style:normal;transform:translateX(-100%);letter-spacing:0.25px;">20,125</div>
<div class="t" style="left:1456.95px;top:802.95px;font-size:14px;color:#333;font-weight:normal;font-style:normal;transform:translateX(-100%);letter-spacing:0.25px;">20,075</div>
<div class="t" style="left:1535.95px;top:802.95px;font-size:14px;color:#333;font-weight:normal;font-style:normal;transform:translateX(-100%);letter-spacing:0.25px;">18,865</div>
<div class="t" style="left:1614.95px;top:802.95px;font-size:14px;color:#333;font-weight:normal;font-style:normal;transform:translateX(-100%);letter-spacing:0.25px;">21,744</div>
<div class="t" style="left:1693.95px;top:802.95px;font-size:14px;color:#333;font-weight:normal;font-style:normal;transform:translateX(-100%);letter-spacing:0.25px;">24,452</div>
<div class="t" style="left:1772.95px;top:802.95px;font-size:14px;color:#333;font-weight:normal;font-style:normal;transform:translateX(-100%);letter-spacing:0.25px;clip-path:inset(-5px 24.4px -5px 0);">13,000</div>
<div class="a" style="left:137.5px;top:823px;width:1612.5px;height:3px;background:#111"></div>
<div class="t" style="left:140px;top:827.73px;font-size:13.2px;color:#222;font-weight:bold;font-style:normal;">Expenses</div>
<div class="a" style="left:137px;top:848px;width:642px;height:21px;background:#ffffff"></div>
<div class="a" style="left:137px;top:869px;width:642px;height:1px;background:#e4e6ea"></div>
<div class="a" style="left:510px;top:848px;width:1px;height:21px;background:#e4e6ea"></div>
<div class="a" style="left:779px;top:848px;width:526px;height:22px;background:#ffffc9"></div>
<div class="a" style="left:779px;top:848px;width:526px;height:1px;background:#e4e6ea"></div>
<div class="a" style="left:779px;top:869px;width:526px;height:1px;background:#e4e6ea"></div>
<div class="a" style="left:779px;top:848px;width:1px;height:22px;background:#e4e6ea"></div>
<div class="a" style="left:1049px;top:848px;width:1px;height:22px;background:#e4e6ea"></div>
<div class="a" style="left:1114px;top:848px;width:1px;height:22px;background:#e4e6ea"></div>
<div class="a" style="left:1190px;top:848px;width:1px;height:22px;background:#e4e6ea"></div>
<div class="a" style="left:1247px;top:848px;width:1px;height:22px;background:#e4e6ea"></div>
<div class="a" style="left:1304px;top:848px;width:1px;height:22px;background:#e4e6ea"></div>
<div class="a" style="left:137px;top:869px;width:1168px;height:64px;background:#ffffc9"></div>
<div class="a" style="left:137px;top:869px;width:1168px;height:1px;background:#e4e6ea"></div>
<div class="a" style="left:137px;top:890px;width:1168px;height:1px;background:#e4e6ea"></div>
<div class="a" style="left:137px;top:911px;width:1168px;height:1px;background:#e4e6ea"></div>
<div class="a" style="left:137px;top:932px;width:1168px;height:1px;background:#e4e6ea"></div>
<div class="a" style="left:137px;top:869px;width:1px;height:64px;background:#e4e6ea"></div>
<div class="a" style="left:510px;top:869px;width:1px;height:64px;background:#e4e6ea"></div>
<div class="a" style="left:779px;top:869px;width:1px;height:64px;background:#e4e6ea"></div>
<div class="a" style="left:1049px;top:869px;width:1px;height:64px;background:#e4e6ea"></div>
<div class="a" style="left:1114px;top:869px;width:1px;height:64px;background:#e4e6ea"></div>
<div class="a" style="left:1190px;top:869px;width:1px;height:64px;background:#e4e6ea"></div>
<div class="a" style="left:1247px;top:869px;width:1px;height:64px;background:#e4e6ea"></div>
<div class="a" style="left:1304px;top:869px;width:1px;height:64px;background:#e4e6ea"></div>
<div class="t" style="left:140px;top:849.02px;font-size:13.8px;color:#333;font-weight:normal;font-style:normal;">Project 1</div>
<div class="t" style="left:511.5px;top:849.02px;font-size:13.8px;color:#333;font-weight:normal;font-style:normal;">Consulting</div>
<div class="t" style="left:781.8px;top:849.02px;font-size:13.8px;color:#3f6462;font-weight:normal;font-style:normal;">Consulting Services - External</div>
<div class="t" style="left:1112.75px;top:848.95px;font-size:14px;color:#4c6272;font-weight:normal;font-style:normal;transform:translateX(-100%);letter-spacing:0.25px;">490</div>
<div class="t" style="left:1188.55px;top:848.95px;font-size:14px;color:#4c6272;font-weight:normal;font-style:normal;transform:translateX(-100%);letter-spacing:0.25px;">175.00</div>
<div class="t" style="left:1219px;top:849.02px;font-size:13.8px;color:#4c6272;font-weight:normal;font-style:normal;transform:translateX(-50%);">Jan</div>
<div class="t" style="left:1276.3px;top:849.02px;font-size:13.8px;color:#4c6272;font-weight:normal;font-style:normal;transform:translateX(-50%);">Dec</div>
<div class="t" style="left:1377.95px;top:848.95px;font-size:14px;color:#333;font-weight:normal;font-style:normal;transform:translateX(-100%);letter-spacing:0.25px;">7,146</div>
<div class="t" style="left:1456.95px;top:848.95px;font-size:14px;color:#333;font-weight:normal;font-style:normal;transform:translateX(-100%);letter-spacing:0.25px;">7,146</div>
<div class="t" style="left:1535.95px;top:848.95px;font-size:14px;color:#333;font-weight:normal;font-style:normal;transform:translateX(-100%);letter-spacing:0.25px;">7,146</div>
<div class="t" style="left:1614.95px;top:848.95px;font-size:14px;color:#333;font-weight:normal;font-style:normal;transform:translateX(-100%);letter-spacing:0.25px;">7,146</div>
<div class="t" style="left:1693.95px;top:848.95px;font-size:14px;color:#333;font-weight:normal;font-style:normal;transform:translateX(-100%);letter-spacing:0.25px;">7,146</div>
<div class="t" style="left:1772.95px;top:848.95px;font-size:14px;color:#333;font-weight:normal;font-style:normal;transform:translateX(-100%);letter-spacing:0.25px;clip-path:inset(-5px 24.4px -5px 0);">7,146</div>
<div class="t" style="left:1377.95px;top:869.95px;font-size:14px;color:#333;font-weight:normal;font-style:normal;transform:translateX(-100%);letter-spacing:0.25px;">0</div>
<div class="t" style="left:1456.95px;top:869.95px;font-size:14px;color:#333;font-weight:normal;font-style:normal;transform:translateX(-100%);letter-spacing:0.25px;">0</div>
<div class="t" style="left:1535.95px;top:869.95px;font-size:14px;color:#333;font-weight:normal;font-style:normal;transform:translateX(-100%);letter-spacing:0.25px;">0</div>
<div class="t" style="left:1614.95px;top:869.95px;font-size:14px;color:#333;font-weight:normal;font-style:normal;transform:translateX(-100%);letter-spacing:0.25px;">0</div>
<div class="t" style="left:1693.95px;top:869.95px;font-size:14px;color:#333;font-weight:normal;font-style:normal;transform:translateX(-100%);letter-spacing:0.25px;">0</div>
<div class="t" style="left:1772.95px;top:869.95px;font-size:14px;color:#333;font-weight:normal;font-style:normal;transform:translateX(-100%);letter-spacing:0.25px;clip-path:inset(-5px 24.4px -5px 0);">0</div>
<div class="t" style="left:1377.95px;top:890.95px;font-size:14px;color:#333;font-weight:normal;font-style:normal;transform:translateX(-100%);letter-spacing:0.25px;">0</div>
<div class="t" style="left:1456.95px;top:890.95px;font-size:14px;color:#333;font-weight:normal;font-style:normal;transform:translateX(-100%);letter-spacing:0.25px;">0</div>
<div class="t" style="left:1535.95px;top:890.95px;font-size:14px;color:#333;font-weight:normal;font-style:normal;transform:translateX(-100%);letter-spacing:0.25px;">0</div>
<div class="t" style="left:1614.95px;top:890.95px;font-size:14px;color:#333;font-weight:normal;font-style:normal;transform:translateX(-100%);letter-spacing:0.25px;">0</div>
<div class="t" style="left:1693.95px;top:890.95px;font-size:14px;color:#333;font-weight:normal;font-style:normal;transform:translateX(-100%);letter-spacing:0.25px;">0</div>
<div class="t" style="left:1772.95px;top:890.95px;font-size:14px;color:#333;font-weight:normal;font-style:normal;transform:translateX(-100%);letter-spacing:0.25px;clip-path:inset(-5px 24.4px -5px 0);">0</div>
<div class="t" style="left:1377.95px;top:911.95px;font-size:14px;color:#333;font-weight:normal;font-style:normal;transform:translateX(-100%);letter-spacing:0.25px;">0</div>
<div class="t" style="left:1456.95px;top:911.95px;font-size:14px;color:#333;font-weight:normal;font-style:normal;transform:translateX(-100%);letter-spacing:0.25px;">0</div>
<div class="t" style="left:1535.95px;top:911.95px;font-size:14px;color:#333;font-weight:normal;font-style:normal;transform:translateX(-100%);letter-spacing:0.25px;">0</div>
<div class="t" style="left:1614.95px;top:911.95px;font-size:14px;color:#333;font-weight:normal;font-style:normal;transform:translateX(-100%);letter-spacing:0.25px;">0</div>
<div class="t" style="left:1693.95px;top:911.95px;font-size:14px;color:#333;font-weight:normal;font-style:normal;transform:translateX(-100%);letter-spacing:0.25px;">0</div>
<div class="t" style="left:1772.95px;top:911.95px;font-size:14px;color:#333;font-weight:normal;font-style:normal;transform:translateX(-100%);letter-spacing:0.25px;clip-path:inset(-5px 24.4px -5px 0);">0</div>
</div>
<div class="a" style="left:1749.5px;top:202px;width:2.5px;height:724px;background:#c6c6c6"></div>
<div class="a" style="left:1752px;top:202px;width:18px;height:724px;background:#e2e2e2"></div>
<div class="a" style="left:1754.5px;top:202.5px;width:15px;height:15px;background:#fff;border:1px solid #c4c4c4"></div>
<svg class="a" style="left:1757px;top:206px" width="10" height="7" viewBox="0 0 10 7"><path d="M1 5.5 L5 1.5 L9 5.5Z" fill="#666"/></svg>
<div class="a" style="left:1754.5px;top:217px;width:15px;height:141px;background:#fff;border:1px solid #c4c4c4"></div>
<div class="a" style="left:1754.5px;top:911px;width:15px;height:15px;background:#fff;border:1px solid #c4c4c4"></div>
<svg class="a" style="left:1757px;top:915px" width="10" height="7" viewBox="0 0 10 7"><path d="M1 1.5 L5 5.5 L9 1.5Z" fill="#666"/></svg>
<svg class="a" style="left:1733px;top:178px" width="15" height="14" viewBox="0 0 15 14"><path d="M1 5 V13 H13 V1 H5" fill="none" stroke="#c8c8c8" stroke-width="1.3"/><rect x="1.5" y="9.5" width="3.5" height="3" fill="none" stroke="#c8c8c8" stroke-width="1"/><path d="M6 8 L11.5 2.5 M8 2.5 H11.5 V6" fill="none" stroke="#c8c8c8" stroke-width="1.6"/></svg>
<svg class="a" style="left:1756px;top:178px" width="14" height="14" viewBox="0 0 14 14"><rect x="0.5" y="1" width="2" height="12" fill="#c8c8c8"/><g fill="none" stroke="#c8c8c8" stroke-width="1.2"><rect x="4.5" y="1" width="10" height="12"/><path d="M4.5 5 H14.5 M4.5 9 H14.5 M8 1 V13 M11.5 1 V13"/></g></svg>
<div class="a" style="left:130px;top:926px;width:1645px;height:30px;background:#e6e6e6;border-top:1px solid #c8c8c8"></div>
<div class="a" style="left:130px;top:955.5px;width:1645px;height:30px;background:#2f3642"></div>
<svg class="a" style="left:155px;top:936px" width="8" height="10" viewBox="0 0 8 10"><path d="M6 1.5 L2 5 L6 8.5Z" fill="#bdbdbd"/></svg>
<svg class="a" style="left:186px;top:936px" width="8" height="10" viewBox="0 0 8 10"><path d="M2 1.5 L6 5 L2 8.5Z" fill="#bdbdbd"/></svg>
<div class="a" style="left:234.5px;top:926px;width:122px;height:26.5px;background:#fff;border-left:1px solid #c8c8c8;border-right:1px solid #c8c8c8;border-bottom:2px solid #217346"></div>
<div class="t" style="left:248.5px;top:928.5px;font-size:13.75px;font-weight:bold;color:#217346">ProjectBudget</div>
<div class="t" style="left:369.5px;top:928.5px;font-size:13.8px;color:#555">Directions</div>
<div class="a" style="left:449px;top:931px;width:1px;height:21px;background:#aaa"></div>
<div class="a" style="left:1085.5px;top:937px;width:2px;height:2px;border-radius:1px;background:#999"></div>
<div class="a" style="left:1085.5px;top:941.5px;width:2px;height:2px;border-radius:1px;background:#999"></div>
<div class="a" style="left:1085.5px;top:946px;width:2px;height:2px;border-radius:1px;background:#999"></div>
<div class="a" style="left:1102px;top:934.5px;width:648px;height:14.5px;background:#dadada"></div>
<div class="a" style="left:1101.5px;top:934px;width:157px;height:15px;background:#fff;border:1px solid #b4b4b4"></div>
<div class="a" style="left:1116px;top:934px;width:2px;height:15px;background:#b4b4b4"></div>
<svg class="a" style="left:1105px;top:937px" width="8" height="10" viewBox="0 0 8 10"><path d="M6 1 L2 5 L6 9Z" fill="#555"/></svg>
<div class="a" style="left:1734px;top:934px;width:16px;height:15px;background:#fff;border:1px solid #b4b4b4"></div>
<svg class="a" style="left:1738px;top:937px" width="8" height="10" viewBox="0 0 8 10"><path d="M2 1 L6 5 L2 9Z" fill="#555"/></svg>
<div class="t" style="left:821px;top:961px;font-size:16.5px;color:#6b7079;line-height:22px;z-index:5">Spreading and Line item details</div>
<svg class="a" style="left:1061px;top:964px;z-index:5" width="15" height="11" viewBox="0 0 15 11"><path d="M2 9 L7.5 3.5 L13 9" fill="none" stroke="#6b7079" stroke-width="2.6"/></svg>
</div></body></html>
